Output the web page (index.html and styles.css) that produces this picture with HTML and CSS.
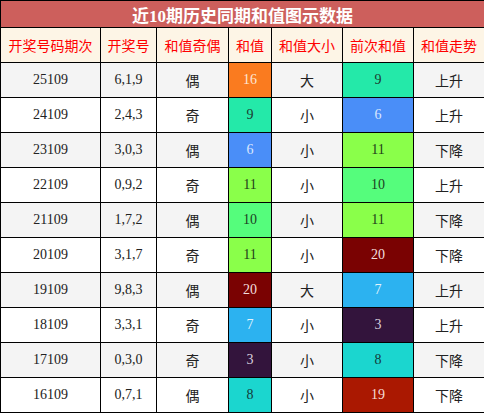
FILE: index.html
```html
<!doctype html>
<html lang="zh">
<head>
    <meta charset="UTF-8">
    <title>近10期历史同期和值图示数据</title>
    <link rel="stylesheet" href="styles.css">
</head>
<body>
    <table class="sumTable">
        <colgroup>
            <col class="c1"><col class="c2"><col class="c3"><col class="c4"><col class="c5"><col class="c6"><col class="c7">
        </colgroup>
        <thead>
            <tr class="title"><th colspan="7">近10期历史同期和值图示数据</th></tr>
            <tr class="head">
                <th>开奖号码期次</th><th>开奖号</th><th>和值奇偶</th><th>和值</th><th>和值大小</th><th>前次和值</th><th>和值走势</th>
            </tr>
        </thead>
        <tbody>
            <tr><td>25109</td><td>6,1,9</td><td>偶</td><td class="s16">16</td><td>大</td><td class="s9">9</td><td>上升</td></tr>
            <tr><td>24109</td><td>2,4,3</td><td>奇</td><td class="s9">9</td><td>小</td><td class="s6">6</td><td>上升</td></tr>
            <tr><td>23109</td><td>3,0,3</td><td>偶</td><td class="s6">6</td><td>小</td><td class="s11">11</td><td>下降</td></tr>
            <tr><td>22109</td><td>0,9,2</td><td>奇</td><td class="s11">11</td><td>小</td><td class="s10">10</td><td>上升</td></tr>
            <tr><td>21109</td><td>1,7,2</td><td>偶</td><td class="s10">10</td><td>小</td><td class="s11">11</td><td>下降</td></tr>
            <tr><td>20109</td><td>3,1,7</td><td>奇</td><td class="s11">11</td><td>小</td><td class="s20">20</td><td>下降</td></tr>
            <tr><td>19109</td><td>9,8,3</td><td>偶</td><td class="s20">20</td><td>大</td><td class="s7">7</td><td>上升</td></tr>
            <tr><td>18109</td><td>3,3,1</td><td>奇</td><td class="s7">7</td><td>小</td><td class="s3">3</td><td>上升</td></tr>
            <tr><td>17109</td><td>0,3,0</td><td>奇</td><td class="s3">3</td><td>小</td><td class="s8">8</td><td>下降</td></tr>
            <tr><td>16109</td><td>0,7,1</td><td>偶</td><td class="s8">8</td><td>小</td><td class="s19">19</td><td>下降</td></tr>
        </tbody>
    </table>
</body>
</html>
```

FILE: styles.css
```css
body{
    margin: 0;
    background-color: #ffffff;
    font-family: "Liberation Serif", "Noto Sans CJK SC", serif;
}
.sumTable{
    width: 484px;
    border-collapse: collapse;
    table-layout: fixed;
    font-size: 14px;
    color: #222;
}
.c1{ width: 100px; }
.c2{ width: 56px; }
.c3{ width: 72px; }
.c4{ width: 43px; }
.c5{ width: 71px; }
.c6{ width: 71px; }
.c7{ width: 71px; }

.sumTable th,
.sumTable td{
    border: 1px solid #000;
    text-align: center;
    padding: 0;
}
.title th{
    height: 26px;
    background-color: #cd5f5c;
    color: #fff;
    font-size: 17px;
    font-weight: bold;
}
.head th{
    height: 34px;
    background-color: #fdf5e6;
    color: #ff0000;
    font-weight: normal;
}
.sumTable td{
    height: 34px;
}
tbody tr:nth-child(odd) td{
    background-color: #f4f4f4;
}
tbody tr:nth-child(even) td{
    background-color: #ffffff;
}

/* 和值颜色 */
.sumTable td.s16{ background-color: #fa7b1f; color: #fde6d6; }
.sumTable td.s9{ background-color: #24e9a9; color: #1d3a30; }
.sumTable td.s6{ background-color: #4a8ef8; color: #dbe7fd; }
.sumTable td.s11{ background-color: #8aff4a; color: #24401a; }
.sumTable td.s10{ background-color: #55fd7c; color: #1c3d24; }
.sumTable td.s20{ background-color: #7a0202; color: #f2dede; }
.sumTable td.s7{ background-color: #2cb2f0; color: #e3f2fb; }
.sumTable td.s3{ background-color: #33143c; color: #d9d0dc; }
.sumTable td.s8{ background-color: #1bd6cf; color: #143c3a; }
.sumTable td.s19{ background-color: #aa1801; color: #f6dcd7; }
```
